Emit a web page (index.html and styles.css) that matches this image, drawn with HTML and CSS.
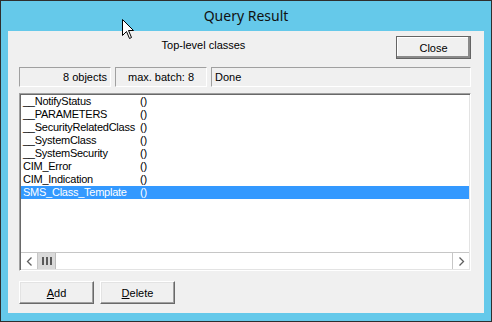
FILE: index.html
```html
<!DOCTYPE html>
<html lang="en">
<head>
    <meta charset="UTF-8">
    <title>Query Result</title>
    <link rel="stylesheet" href="styles.css">
</head>
<body>
    <div class="window">
        <div class="titlebar">Query Result</div>

        <div class="client">
            <div class="top-row">
                <div class="caption">Top-level classes</div>
                <button class="btn btn-default">Close</button>
            </div>

            <!-- status panels -->
            <div class="status">
                <div class="panel panel-count">8 objects</div>
                <div class="panel panel-batch">max. batch: 8</div>
                <div class="panel panel-state">Done</div>
            </div>

            <div class="listbox">
                <div class="rows">
                    <div class="row"><span>__NotifyStatus</span><span>()</span></div>
                    <div class="row"><span>__PARAMETERS</span><span>()</span></div>
                    <div class="row"><span>__SecurityRelatedClass</span><span>()</span></div>
                    <div class="row"><span>__SystemClass</span><span>()</span></div>
                    <div class="row"><span>__SystemSecurity</span><span>()</span></div>
                    <div class="row"><span>CIM_Error</span><span>()</span></div>
                    <div class="row"><span>CIM_Indication</span><span>()</span></div>
                    <div class="row selected"><span>SMS_Class_Template</span><span>()</span></div>
                </div>
                <div class="hscroll">
                    <div class="arrow">
                        <svg width="7" height="9" viewBox="0 0 7 9"><path d="M5.5 0.5 L1.5 4.5 L5.5 8.5" fill="none" stroke="#606060" stroke-width="1.3"/></svg>
                    </div>
                    <div class="thumb"><span></span><span></span><span></span></div>
                    <div class="track"></div>
                    <div class="arrow">
                        <svg width="7" height="9" viewBox="0 0 7 9"><path d="M1.5 0.5 L5.5 4.5 L1.5 8.5" fill="none" stroke="#606060" stroke-width="1.3"/></svg>
                    </div>
                </div>
            </div>

            <div class="bottom-row">
                <button class="btn"><u>A</u>dd</button>
                <button class="btn"><u>D</u>elete</button>
            </div>
        </div>

        <!-- mouse pointer over the title bar -->
        <svg class="cursor" width="13" height="21" viewBox="0 0 13 21">
            <path d="M0.5 0.5 L0.5 16.5 L4.5 12.5 L7.5 19.5 L9.5 18.5 L6.5 11.5 L11.5 11.5 Z" fill="#fff" stroke="#000" stroke-width="1"/>
        </svg>
    </div>
</body>
</html>
```

FILE: styles.css
```css
body {
    margin: 0;
    font-family: "Liberation Sans", Arial, sans-serif;
    font-size: 11px;
    color: #000;
}

.window {
    position: relative;
    width: 492px;
    height: 322px;
    box-sizing: border-box;
    border: 1px solid #2e2e2e;
    background-color: #65c9ea;
    display: flex;
    flex-direction: column;
}

.titlebar {
    height: 30px;
    line-height: 29px;
    text-align: center;
    font-family: "Noto Sans", "Open Sans", sans-serif;
    font-size: 14px;
    color: #111;
}

.client {
    flex: 1;
    margin: 0 7px 8px 7px;
    padding: 5px 13px 0 11px;
    background-color: #f0f0f0;
}

.top-row {
    display: flex;
    align-items: center;
    height: 23px;
}

.caption {
    flex: 1;
    text-align: center;
    padding-right: 8px;
    margin-top: -5px;
}

.btn {
    width: 75px;
    height: 23px;
    padding: 0;
    font-family: "Liberation Sans", Arial, sans-serif;
    font-size: 11px;
    color: #000;
    background-color: #f0f0f0;
    border: 1px solid;
    border-color: #fff #696969 #696969 #fff;
    box-shadow: inset -1px -1px #a0a0a0, inset 1px 1px #e3e3e3;
}

.btn-default {
    border: 1px solid #646464;
    box-shadow: inset -2px -2px #8a8a8a, inset 1px 1px #fff;
}

.status {
    display: flex;
    gap: 4px;
    margin-top: 8px;
    height: 20px;
}

.panel {
    box-sizing: border-box;
    height: 20px;
    line-height: 18px;
    padding: 0 3px;
    border: 1px solid;
    border-color: #a0a0a0 #fff #fff #a0a0a0;
}

.panel-count {
    width: 92px;
    text-align: right;
}

.panel-batch {
    width: 92px;
    text-align: center;
}

.panel-state {
    flex: 1;
}

.listbox {
    margin-top: 6px;
    height: 178px;
    box-sizing: border-box;
    border: 1px solid;
    border-color: #a0a0a0 #fff #fff #a0a0a0;
    padding: 1px;
    box-shadow: inset 1px 1px #696969, inset -1px -1px #e3e3e3;
    background-color: #fff;
    display: flex;
    flex-direction: column;
}

.rows {
    flex: 1;
    background-color: #fff;
}

.row {
    display: grid;
    grid-template-columns: 117px 1fr;
    height: 13px;
    line-height: 13px;
    padding-left: 2px;
    white-space: nowrap;
    letter-spacing: -0.25px;
}

.row.selected {
    background-color: #3399ff;
    color: #fff;
}

.hscroll {
    display: flex;
    height: 17px;
    box-sizing: border-box;
    border-top: 1px solid #c6c6c6;
    background-color: #fff;
}

.arrow {
    width: 17px;
    box-sizing: border-box;
    display: flex;
    align-items: center;
    justify-content: center;
    background-color: #fff;
}

.arrow:first-child {
    border-right: 1px solid #c6c6c6;
}

.arrow:last-child {
    border-left: 1px solid #c6c6c6;
}

.thumb {
    width: 18px;
    box-sizing: border-box;
    background-color: #dadada;
    border-right: 1px solid #bcbcbc;
    display: flex;
    align-items: center;
    justify-content: center;
    gap: 2px;
}

.thumb span {
    width: 2px;
    height: 8px;
    background-color: #5a5a5a;
}

.track {
    flex: 1;
}

.bottom-row {
    display: flex;
    gap: 6px;
    margin-top: 10px;
}

.cursor {
    position: absolute;
    left: 121px;
    top: 18px;
}
```
